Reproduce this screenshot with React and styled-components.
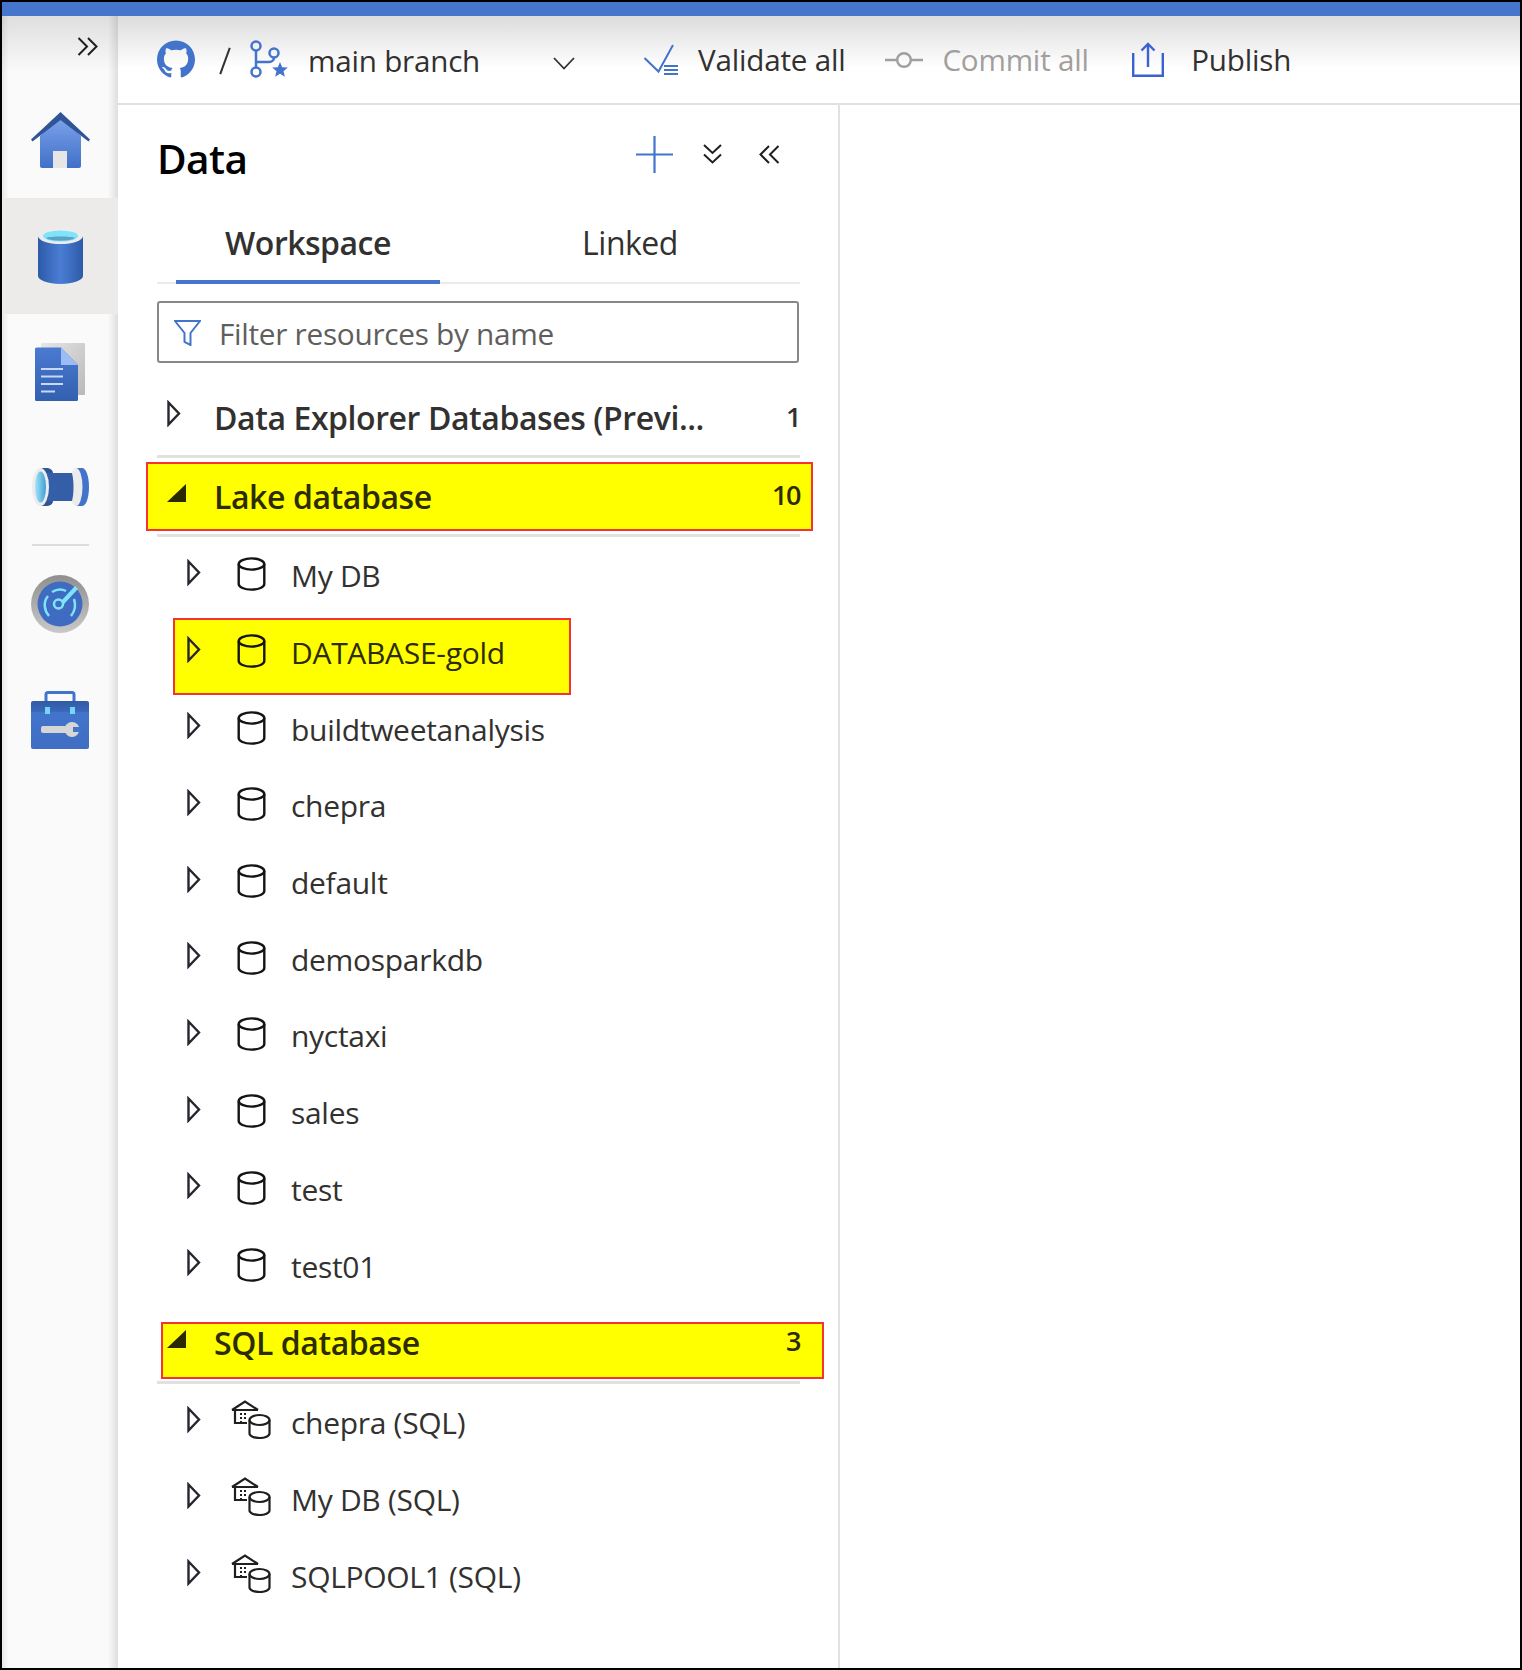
import styled, { createGlobalStyle } from "styled-components";

const GlobalStyle = createGlobalStyle`
  body {
    margin: 0;
    background: #fff;
    font-family: "Open Sans", "Liberation Sans", sans-serif;
    color: #323130;
  }
`

const Frame = styled.div`
  width: 1522px;
  height: 1670px;
  box-sizing: border-box;
  border: 2px solid #000;
  display: flex;
  flex-direction: column;
  overflow: hidden;
`

const TopBar = styled.div`
  height: 14px;
  flex: none;
  background: #4676cc;
`

const Body = styled.div`
  flex: 1;
  display: flex;
  min-height: 0;
`

const Sidebar = styled.nav`
  width: 116px;
  flex: none;
  display: flex;
  flex-direction: column;
  background:
    linear-gradient(to right, rgba(0, 0, 0, 0.07), transparent 7px, transparent calc(100% - 10px), rgba(0, 0, 0, 0.11)),
    linear-gradient(#dedede, #fafafa 55px);
`

const SideToggle = styled.div`
  height: 66px;
  flex: none;
  display: flex;
  justify-content: flex-end;
  align-items: flex-start;
  padding: 21px 20px 0 0;
  box-sizing: border-box;
`

const SideItem = styled.div`
  height: ${(p) => p.$height || 116}px;
  flex: none;
  display: flex;
  align-items: center;
  justify-content: center;
  background: ${(p) => (p.$active ? "#edebe9" : "transparent")};
`

const SideDivider = styled.div`
  height: 2px;
  flex: none;
  margin: 0 29px 0 30px;
  background: #dcdcdc;
`

const Main = styled.div`
  flex: 1;
  min-width: 0;
  display: flex;
  flex-direction: column;
`

const Header = styled.header`
  height: 89px;
  flex: none;
  box-sizing: border-box;
  border-bottom: 2px solid #e1e1e1;
  background: linear-gradient(#dcdcdc, #ffffff 52px);
  display: flex;
  align-items: center;
  font-size: 29.6px;
  padding: 0 0 0 39px;
`

const Slash = styled.span`
  width: 2px;
  height: 28px;
  margin: 3px 0 0 29px;
  background: #323130;
  transform: rotate(20deg);
`

const BranchSlot = styled.span`
  display: flex;
  margin-left: 24px;
`

const BranchName = styled.span`
  margin-left: 20px;
  width: 245px;
  letter-spacing: -0.2px;
  padding-top: 2px;
`

const DropSlot = styled.span`
  display: flex;
  margin-top: 8px;
`

const HeaderAction = styled.span`
  display: flex;
  align-items: center;
  gap: ${(p) => p.$gap}px;
  margin-left: ${(p) => p.$left}px;
  color: ${(p) => (p.$disabled ? "#a19f9d" : "#323130")};
  letter-spacing: -0.2px;
`

const Content = styled.div`
  flex: 1;
  display: flex;
  min-height: 0;
`

const Panel = styled.section`
  width: 722px;
  flex: none;
  box-sizing: border-box;
  border-right: 2px solid #e1e1e1;
  padding: 0 38px 0 39px;
`

const TitleRow = styled.div`
  height: 110px;
  display: flex;
  align-items: center;
`

const Title = styled.h1`
  margin: -4px 0 0;
  font-size: 40.5px;
  font-weight: 600;
  color: #000;
  letter-spacing: -0.6px;
`

const TitleTools = styled.div`
  margin-left: auto;
  display: flex;
  align-items: center;
  margin-top: -12px;
  padding-right: 20px;
  gap: 30px;

  & > :last-child {
    margin-left: 7px;
  }
`

const Tabs = styled.div`
  height: 69px;
  box-sizing: border-box;
  border-bottom: 2px solid #edebe9;
  display: flex;
`

const Tab = styled.div`
  height: 69px;
  box-sizing: border-box;
  padding: 6px 0 0;
  text-align: center;
  width: ${(p) => p.$width}px;
  margin-left: ${(p) => p.$left}px;
  font-size: 32px;
  font-weight: ${(p) => (p.$active ? 600 : 400)};
  letter-spacing: -0.5px;
  border-bottom: 4px solid ${(p) => (p.$active ? "#4676cc" : "transparent")};
`

const FilterBox = styled.div`
  height: 62px;
  margin: 17px 1px 0 0;
  box-sizing: border-box;
  border: 2px solid #8a8886;
  border-radius: 3px;
  display: flex;
  align-items: center;
  padding: 2px 0 0 15px;
  gap: 18px;
  font-size: 29.8px;
  color: #605e5c;
  letter-spacing: -0.3px;
`

const Tree = styled.div`
  margin-top: 18px;
`

const Row = styled.div`
  position: relative;
  isolation: isolate;
  display: flex;
  align-items: center;
  box-sizing: border-box;
  height: ${(p) => p.$height}px;
  padding-left: ${(p) => p.$indent}px;
  color: ${(p) => (p.$marked ? "#2d2c00" : "#323130")};
`

const Mark = styled.span`
  position: absolute;
  z-index: -1;
  top: ${(p) => p.$top}px;
  bottom: ${(p) => p.$bottom}px;
  left: ${(p) => p.$left}px;
  right: ${(p) => p.$right}px;
  background: #ffff00;
  border: 2px solid #f53333;
`

const Arrow = styled.span`
  width: ${(p) => p.$width}px;
  flex: none;
  display: flex;
  margin-top: ${(p) => p.$lift}px;
`

const GroupName = styled.span`
  margin: ${(p) => (p.$open ? 0 : -2)}px 0 0 28px;
  font-size: 32px;
  font-weight: 600;
  letter-spacing: -0.42px;
  white-space: nowrap;
`

const GroupCount = styled.span`
  margin-left: auto;
  font-size: 27px;
  font-weight: 600;
  letter-spacing: -1.5px;
  margin-top: -4px;
`

const Divider = styled.div`
  height: 3px;
  background: #e1e1e1;
`

const NodeIcon = styled.span`
  width: 46px;
  flex: none;
  margin-left: 27px;
  display: flex;
  justify-content: center;
  margin-top: ${(p) => p.$lift}px;
`

const NodeName = styled.span`
  margin-left: 17px;
  font-size: 30px;
  letter-spacing: -0.3px;
  white-space: nowrap;
  line-height: 1;
  margin-top: 2px;
`

const ChevronsRight = () => (
  <svg width="21" height="19" viewBox="0 0 21 19" fill="none" stroke="#201f1e" strokeWidth="2">
    <path d="M1.5 1 10 9.5 1.5 18M11 1l8.5 8.5L11 18" />
  </svg>
);

const HomeIcon = () => (
  <svg width="59" height="56" viewBox="0 0 59 56">
    <defs>
      <linearGradient id="homeBody" x1="0" y1="0" x2="0" y2="1">
        <stop offset="0" stopColor="#7fa4ec" />
        <stop offset="1" stopColor="#3f70c8" />
      </linearGradient>
    </defs>
    <path d="M29.5 4 50 24v30a2 2 0 0 1-2 2H11a2 2 0 0 1-2-2V24z" fill="url(#homeBody)" />
    <path d="M29.5 0 59 27.5l-1.5 2L29.5 8 1.5 29.5 0 27.5z" fill="#2f5597" />
    <rect x="22" y="39" width="14" height="17" fill="#e6e6e6" />
  </svg>
);

const DatabaseIcon = () => (
  <svg width="45" height="56" viewBox="0 0 45 56">
    <defs>
      <linearGradient id="dbBody" x1="0" y1="0" x2="1" y2="0">
        <stop offset="0" stopColor="#2d5aa8" />
        <stop offset="0.5" stopColor="#4a7ed4" />
        <stop offset="1" stopColor="#2d5aa8" />
      </linearGradient>
    </defs>
    <path d="M0 8v40c0 4 10 8 22.5 8S45 52 45 48V8z" fill="url(#dbBody)" />
    <ellipse cx="22.5" cy="8" rx="22.5" ry="8" fill="#ececec" />
    <ellipse cx="22.5" cy="8" rx="17.5" ry="5.5" fill="#7fe3fb" />
    <path d="M8 10c3-2 26-2 29 0-4 3.500-25 3.500-29 0z" fill="#5aa3c4" />
  </svg>
);

const DocumentIcon = () => (
  <svg width="50" height="58" viewBox="0 0 50 58">
    <defs>
      <linearGradient id="docBack" x1="0" y1="0" x2="1" y2="1">
        <stop offset="0" stopColor="#e6e6e6" />
        <stop offset="1" stopColor="#b9b9b9" />
      </linearGradient>
      <linearGradient id="docFront" x1="0" y1="0" x2="0" y2="1">
        <stop offset="0" stopColor="#4a7ad2" />
        <stop offset="1" stopColor="#335fae" />
      </linearGradient>
    </defs>
    <rect x="6" y="0" width="44" height="52" rx="1" fill="url(#docBack)" />
    <path d="M0 6a1.500 1.500 0 0 1 1.500-1.500H26L43 22v34.500a1.500 1.500 0 0 1-1.500 1.500h-40A1.500 1.500 0 0 1 0 56.500z" fill="url(#docFront)" />
    <path d="M26 4.500 43 22H26z" fill="#9dbcf5" />
    <path d="M6 26h22M6 33.500h22M6 41h22M6 48.500h14" stroke="#c9d8f6" strokeWidth="2" />
  </svg>
);

const PipeIcon = () => (
  <svg width="57" height="38" viewBox="0 0 57 38">
    <defs>
      <linearGradient id="pipeEye" x1="0" y1="0" x2="1" y2="0">
        <stop offset="0" stopColor="#a5e4f8" />
        <stop offset="1" stopColor="#3f9fd6" />
      </linearGradient>
    </defs>
    <path d="M44 0h6c4 0 7 8 7 19s-3 19-7 19h-6z" fill="#4374cc" />
    <ellipse cx="44" cy="19" rx="6.500" ry="19" fill="#ececec" />
    <path d="M12 5h28c1 4 1.500 9 1.500 14s-.5 10-1.500 14H12z" fill="#355ea8" />
    <path d="M8 0h6c4 0 7 2 7 5H12zM8 38h6c4 0 7-2 7-5H12z" fill="#2f5597" />
    <ellipse cx="8.500" cy="19" rx="8.500" ry="19" fill="#ececec" />
    <ellipse cx="8.500" cy="19" rx="5.500" ry="15.500" fill="url(#pipeEye)" />
  </svg>
);

const MonitorIcon = () => (
  <svg width="58" height="58" viewBox="0 0 58 58">
    <defs>
      <linearGradient id="gaugeRim" x1="0" y1="0" x2="0" y2="1">
        <stop offset="0" stopColor="#8f8f8f" />
        <stop offset="1" stopColor="#c8c8c8" />
      </linearGradient>
    </defs>
    <circle cx="29" cy="29" r="29" fill="url(#gaugeRim)" />
    <circle cx="29" cy="29" r="22.500" fill="#3f6cc0" />
    <g fill="none" stroke="#7fe3fb" strokeWidth="2.500">
      <path d="M18 41c-5-6-6-14-1-20M21 17c5-3 10-3 14-1M40 41c4-5 5-11 3-17" />
      <circle cx="27.500" cy="29" r="4.500" />
    </g>
    <path d="M30 26 44 11l3 3-14 15z" fill="#7fe3fb" />
  </svg>
);

const ToolboxIcon = () => (
  <svg width="58" height="58" viewBox="0 0 58 58">
    <defs>
      <linearGradient id="boxBody" x1="0" y1="0" x2="0" y2="1">
        <stop offset="0" stopColor="#2f5ba6" />
        <stop offset="0.22" stopColor="#3a68ba" />
        <stop offset="0.24" stopColor="#4374cc" />
        <stop offset="1" stopColor="#3f6ec2" />
      </linearGradient>
    </defs>
    <rect x="15" y="1.500" width="28" height="10" rx="2" fill="none" stroke="#4374cc" strokeWidth="3" />
    <rect x="0" y="10" width="58" height="48" rx="2" fill="url(#boxBody)" />
    <rect x="14" y="16" width="5" height="7" fill="#74d6f4" />
    <rect x="39" y="16" width="5" height="7" fill="#74d6f4" />
    <rect x="10" y="35" width="30" height="7" rx="2" fill="#d6d6d6" />
    <circle cx="41" cy="38.500" r="7.500" fill="#d6d6d6" />
    <rect x="42" y="36" width="8" height="5" fill="#4374cc" />
  </svg>
);

const GithubIcon = () => (
  <svg width="38" height="39" viewBox="0 0 16 16" fill="#4374cc">
    <path d="M8 0C3.58 0 0 3.58 0 8c0 3.54 2.29 6.53 5.47 7.59.4.07.55-.17.55-.38 0-.19-.01-.82-.01-1.49-2.01.37-2.53-.49-2.69-.94-.09-.23-.48-.94-.82-1.13-.28-.15-.68-.52-.01-.53.63-.01 1.08.58 1.23.82.72 1.21 1.87.87 2.33.66.07-.52.28-.87.51-1.07-1.78-.2-3.64-.89-3.64-3.95 0-.87.31-1.59.82-2.15-.08-.2-.36-1.02.08-2.12 0 0 .67-.21 2.2.82.64-.18 1.32-.27 2-.27.68 0 1.36.09 2 .27 1.53-1.04 2.2-.82 2.2-.82.44 1.1.16 1.92.08 2.12.51.56.82 1.27.82 2.15 0 3.07-1.87 3.75-3.65 3.95.29.25.54.73.54 1.48 0 1.07-.01 1.93-.01 2.2 0 .21.15.46.55.38A8.013 8.013 0 0 0 16 8c0-4.42-3.58-8-8-8z" />
  </svg>
);

const BranchIcon = () => (
  <svg width="38" height="39" viewBox="0 0 38 39" fill="none" stroke="#4374cc" strokeWidth="2.500">
    <circle cx="6" cy="6" r="4.500" />
    <circle cx="6" cy="32" r="4.500" />
    <circle cx="24" cy="13" r="4.500" />
    <path d="M6 10.500v17M6 22h13c3 0 5-2 5-4.500" />
    <path d="m30 22 2.200 5.200 5.600.4-4.300 3.600 1.400 5.500-4.900-3-4.900 3 1.400-5.500-4.300-3.600 5.600-.4z" fill="#4374cc" stroke="none" />
  </svg>
);

const ChevronDown = () => (
  <svg width="22" height="13" viewBox="0 0 22 13" fill="none" stroke="#323130" strokeWidth="1.800">
    <path d="m1 1 10 10.500L21 1" />
  </svg>
);

const ValidateIcon = () => (
  <svg width="35" height="31" viewBox="0 0 35 31" fill="none" stroke="#4374cc" strokeWidth="2">
    <path d="m0.500 14 14 13.500L29 1" />
    <path d="M20 22h14M20 26h14M20 30h14" strokeWidth="2.200" />
  </svg>
);

const CommitIcon = () => (
  <svg width="38" height="18" viewBox="0 0 38 18" fill="none" stroke="#a19f9d" strokeWidth="2.400">
    <path d="M0 9h12M26 9h12" />
    <circle cx="19" cy="9" r="6.800" />
  </svg>
);

const PublishIcon = () => (
  <svg width="32" height="35" viewBox="0 0 32 35" fill="none" stroke="#3b62d0" strokeWidth="2.400">
    <path d="M1.200 11v22.800h29.600V11" />
    <path d="M16 2v23M9.500 8.500 16 2l6.500 6.500" />
  </svg>
);

const PlusIcon = () => (
  <svg width="37" height="37" viewBox="0 0 37 37" stroke="#4374cc" strokeWidth="2.200">
    <path d="M18.500 0v37M0 18.500h37" />
  </svg>
);

const ChevronsDown = () => (
  <svg width="19" height="20" viewBox="0 0 19 20" fill="none" stroke="#201f1e" strokeWidth="2">
    <path d="m1 1 8.500 8 8.500-8M1 10.500l8.500 8 8.500-8" />
  </svg>
);

const ChevronsLeft = () => (
  <svg width="21" height="19" viewBox="0 0 21 19" fill="none" stroke="#201f1e" strokeWidth="2">
    <path d="M10 1 1.500 9.500 10 18M19.500 1 11 9.500 19.500 18" />
  </svg>
);

const FunnelIcon = () => (
  <svg width="27" height="26" viewBox="0 0 27 26" fill="none" stroke="#4374cc" strokeWidth="2">
    <path d="M1 1h25L16.500 13v12l-6-3V13z" />
  </svg>
);

const ArrowRight = () => (
  <svg width="14" height="27" viewBox="0 0 14 27" fill="none" stroke="#25262e" strokeWidth="2.400">
    <path d="M1.500 2.500 12 13.500 1.500 24.500z" />
  </svg>
);

const ArrowOpen = () => (
  <svg width="19" height="18" viewBox="0 0 19 18" fill="#2a2a00">
    <path d="M19 0v18H0z" />
  </svg>
);

const CylinderIcon = () => (
  <svg width="29" height="34" viewBox="0 0 29 34" fill="none" stroke="#141414" strokeWidth="2.400">
    <ellipse cx="14.500" cy="7" rx="12.800" ry="5.600" />
    <path d="M1.700 7v20c0 3.200 5.700 5.600 12.800 5.600S27.300 30.200 27.300 27V7" />
  </svg>
);

const SqlPoolIcon = () => (
  <svg width="40" height="39" viewBox="0 0 40 39" fill="none" stroke="#201f1e" strokeWidth="2.200">
    <path d="M1 10 14 1.500 27 10M1 10h26M4 10v13h12" />
    <ellipse cx="28.500" cy="20" rx="10" ry="5" fill="#fff" />
    <path d="M18.500 20v13.500c0 2.500 4.500 4.500 10 4.500s10-2 10-4.500V20" />
    <path d="M9 14h2M13 14h2M9 18h2M13 18h2M9 22h2" />
  </svg>
);

const lakeDatabases = ["My DB", "DATABASE-gold", "buildtweetanalysis", "chepra", "default", "demosparkdb", "nyctaxi", "sales", "test", "test01"];
const sqlDatabases = ["chepra (SQL)", "My DB (SQL)", "SQLPOOL1 (SQL)"];

const GroupRow = ({ name, count, open, height, mark }) => (
  <Row $height={height} $indent={10} $marked={!!mark}>
    {mark && <Mark $top={mark.top} $bottom={mark.bottom} $left={mark.left} $right={mark.right} />}
    <Arrow $width={19} $lift={open ? -6 : -10}>{open ? <ArrowOpen /> : <ArrowRight />}</Arrow>
    <GroupName $open={open}>{name}</GroupName>
    <GroupCount>{count}</GroupCount>
  </Row>
);

const NodeRow = ({ name, icon, lift, mark }) => (
  <Row $height={76.7} $indent={30} $marked={!!mark}>
    {mark && <Mark $top={mark.top} $bottom={mark.bottom} $left={mark.left} $right={mark.right} />}
    <Arrow $width={14} $lift={-6}><ArrowRight /></Arrow>
    <NodeIcon $lift={lift}>{icon}</NodeIcon>
    <NodeName>{name}</NodeName>
  </Row>
);

const App = () => {
  return (
    <Frame>
      <GlobalStyle />
      <TopBar />
      <Body>
        <Sidebar>
          <SideToggle><ChevronsRight /></SideToggle>
          <SideItem><HomeIcon /></SideItem>
          <SideItem $active><DatabaseIcon /></SideItem>
          <SideItem><DocumentIcon /></SideItem>
          <SideItem $height={114}><PipeIcon /></SideItem>
          <SideDivider />
          <SideItem><MonitorIcon /></SideItem>
          <SideItem><ToolboxIcon /></SideItem>
        </Sidebar>
        <Main>
          <Header>
            <GithubIcon />
            <Slash />
            <BranchSlot><BranchIcon /></BranchSlot>
            <BranchName>main branch</BranchName>
            <DropSlot><ChevronDown /></DropSlot>
            <HeaderAction $left={69} $gap={19}><ValidateIcon />Validate all</HeaderAction>
            <HeaderAction $left={40} $gap={19} $disabled><CommitIcon />Commit all</HeaderAction>
            <HeaderAction $left={43.5} $gap={27}><PublishIcon />Publish</HeaderAction>
          </Header>
          <Content>
            <Panel>
              <TitleRow>
                <Title>Data</Title>
                <TitleTools>
                  <PlusIcon />
                  <ChevronsDown />
                  <ChevronsLeft />
                </TitleTools>
              </TitleRow>
              <Tabs>
                <Tab $active $width={264} $left={19}>Workspace</Tab>
                <Tab $width={192} $left={94}>Linked</Tab>
              </Tabs>
              <FilterBox>
                <FunnelIcon />
                <span>Filter resources by name</span>
              </FilterBox>
              <Tree>
                <GroupRow name="Data Explorer Databases (Previ..." count="1" height={74} />
                <Divider />
                <GroupRow name="Lake database" count="10" height={76} open mark={{ top: 4, bottom: 3, left: -11, right: -13 }} />
                <Divider />
                {lakeDatabases.map((name) => (
                  <NodeRow
                    key={name}
                    name={name}
                    icon={<CylinderIcon />}
                    lift={-2}
                    mark={name === "DATABASE-gold" ? { top: 4, bottom: -5, left: 16, right: 229 } : null}
                  />
                ))}
                <GroupRow name="SQL database" count="3" height={77} open mark={{ top: 18, bottom: 2, left: 4, right: -24 }} />
                <Divider />
                {sqlDatabases.map((name) => (
                  <NodeRow key={name} name={name} icon={<SqlPoolIcon />} lift={-5} />
                ))}
              </Tree>
            </Panel>
          </Content>
        </Main>
      </Body>
    </Frame>
  );
};

export default App;
